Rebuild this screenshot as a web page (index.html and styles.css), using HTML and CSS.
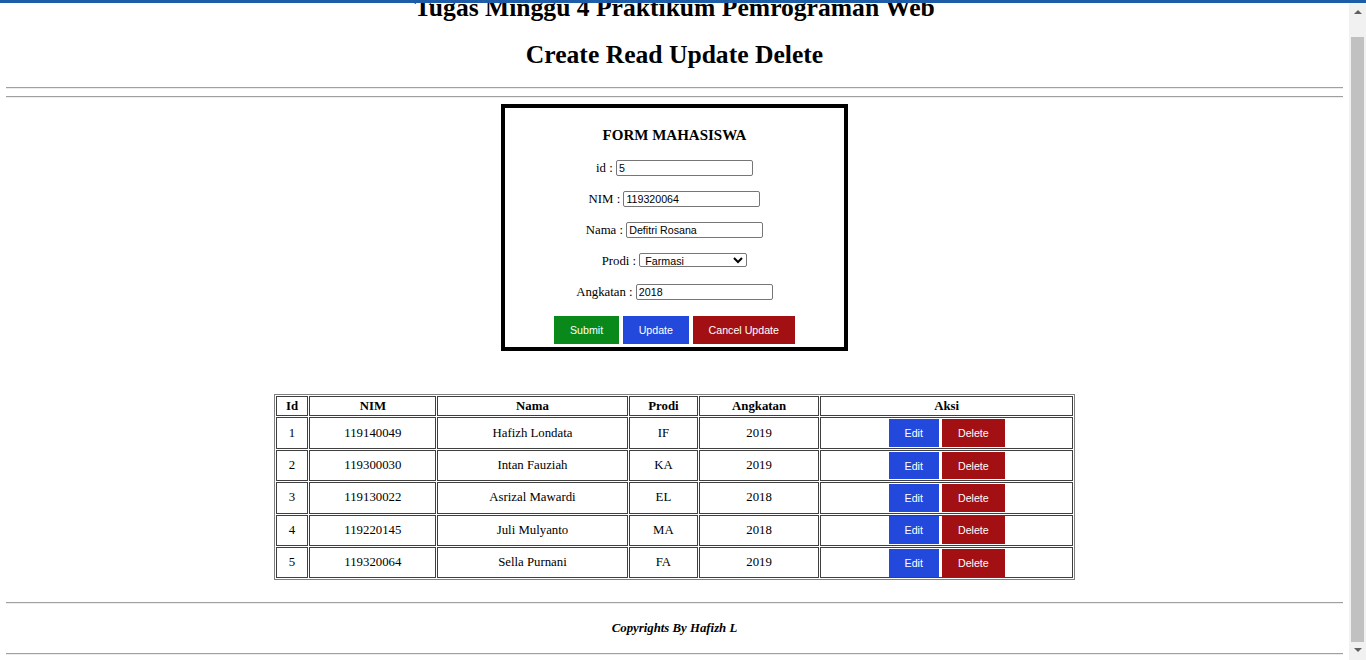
FILE: index.html
```html
<!DOCTYPE html>
<html lang="id">
<head>
<meta charset="utf-8">
<title>Tugas Minggu 4 Praktikum Pemrograman Web</title>
<link rel="stylesheet" href="styles.css">
</head>
<body>
<div class="topbar"></div>
<div class="scrollbar">
  <span class="arrow arrow-up"></span>
  <span class="thumb"></span>
  <span class="arrow arrow-down"></span>
</div>

<header class="header">
  <h1 class="title first">Tugas Minggu 4 Praktikum Pemrograman Web</h1>
  <h1 class="title">Create Read Update Delete</h1>
</header>
<hr>
<hr>

<form class="form-box">
  <h3 class="form-title">FORM MAHASISWA</h3>
  <p class="field">id : <input class="text-input" type="text" value="5"></p>
  <p class="field">NIM : <input class="text-input" type="text" value="119320064"></p>
  <p class="field">Nama : <input class="text-input" type="text" value="Defitri Rosana"></p>
  <p class="field">Prodi : <select class="select-input"><option>Farmasi</option></select></p>
  <p class="field">Angkatan : <input class="text-input" type="text" value="2018"></p>
  <div class="actions">
    <button type="button" class="btn btn-green">Submit</button>
    <button type="button" class="btn btn-blue">Update</button>
    <button type="button" class="btn btn-red">Cancel Update</button>
  </div>
</form>

<table class="data-table">
  <colgroup>
    <col class="c-id"><col class="c-nim"><col class="c-nama"><col class="c-prodi"><col class="c-angkatan"><col class="c-aksi">
  </colgroup>
  <thead>
    <tr><th>Id</th><th>NIM</th><th>Nama</th><th>Prodi</th><th>Angkatan</th><th>Aksi</th></tr>
  </thead>
  <tbody>
    <tr><td>1</td><td>119140049</td><td>Hafizh Londata</td><td>IF</td><td>2019</td>
      <td><div class="row-actions"><button type="button" class="btn btn-blue btn-sm">Edit</button><button type="button" class="btn btn-red btn-sm">Delete</button></div></td></tr>
    <tr><td>2</td><td>119300030</td><td>Intan Fauziah</td><td>KA</td><td>2019</td>
      <td><div class="row-actions"><button type="button" class="btn btn-blue btn-sm">Edit</button><button type="button" class="btn btn-red btn-sm">Delete</button></div></td></tr>
    <tr><td>3</td><td>119130022</td><td>Asrizal Mawardi</td><td>EL</td><td>2018</td>
      <td><div class="row-actions"><button type="button" class="btn btn-blue btn-sm">Edit</button><button type="button" class="btn btn-red btn-sm">Delete</button></div></td></tr>
    <tr><td>4</td><td>119220145</td><td>Juli Mulyanto</td><td>MA</td><td>2018</td>
      <td><div class="row-actions"><button type="button" class="btn btn-blue btn-sm">Edit</button><button type="button" class="btn btn-red btn-sm">Delete</button></div></td></tr>
    <tr><td>5</td><td>119320064</td><td>Sella Purnani</td><td>FA</td><td>2019</td>
      <td><div class="row-actions"><button type="button" class="btn btn-blue btn-sm">Edit</button><button type="button" class="btn btn-red btn-sm">Delete</button></div></td></tr>
  </tbody>
</table>

<hr>
<footer class="footer">
  <h4 class="copyright">Copyrights By Hafizh L</h4>
</footer>
<hr>
</body>
</html>
```

FILE: styles.css
```css
html {
  overflow: hidden;
  background: #ffffff;
}

body {
  margin: 0 17px 0 0;
  padding: 0 6.4px;
  font-family: "Liberation Serif", "Times New Roman", serif;
  font-size: 12.8px;
  color: #000000;
  background: #ffffff;
}

.topbar {
  position: fixed;
  top: 0;
  left: 0;
  right: 0;
  height: 3px;
  background: #1f5ca8;
  z-index: 10;
}

.scrollbar {
  position: fixed;
  top: 0;
  right: 0;
  bottom: 0;
  width: 17px;
  background: #f1f1f1;
  display: flex;
  flex-direction: column;
  align-items: center;
  z-index: 5;
}

.arrow {
  width: 0;
  height: 0;
  border-left: 4px solid transparent;
  border-right: 4px solid transparent;
}

.arrow-up {
  margin-top: 10px;
  border-bottom: 4px solid #606060;
}

.arrow-down {
  margin-bottom: 8px;
  border-top: 4px solid #606060;
}

.thumb {
  display: block;
  width: 13px;
  flex: 1;
  margin: 23px 0 6px;
  background: #c1c1c1;
}

.header {
  text-align: center;
}

.title {
  font-size: 25.6px;
  font-weight: bold;
  margin: 17.15px 0;
}

.title.first {
  margin-top: -6.9px;
}

hr {
  margin: 6.4px 0;
  border: none;
  border-top: 1px solid #a0a0a0;
  border-bottom: 1px solid #ededed;
  height: 0;
}

.form-box {
  width: 339px;
  margin: 6.4px auto 0;
  border: 4px solid #000000;
  padding: 4px 0 3.4px;
  text-align: center;
}

.form-title {
  font-size: 15px;
  font-weight: bold;
  line-height: 17.2px;
  margin: 14.6px 0;
}

.field {
  margin: 13.2px 0;
  line-height: 18px;
  height: 18px;
}

.text-input {
  box-sizing: border-box;
  width: 137px;
  height: 16px;
  padding: 0 2px;
  border: 1px solid #767676;
  border-radius: 2px;
  font-family: "Liberation Sans", Arial, sans-serif;
  font-size: 10.67px;
  color: #000000;
  vertical-align: baseline;
}

.select-input {
  box-sizing: border-box;
  width: 108px;
  height: 14px;
  padding: 0 1px;
  border: 1px solid #767676;
  border-radius: 2px;
  font-family: "Liberation Sans", Arial, sans-serif;
  font-size: 10.67px;
  color: #000000;
  background: #ffffff;
}

.actions {
  display: flex;
  justify-content: center;
  gap: 3.5px;
  margin-top: 14.6px;
}

.btn {
  box-sizing: border-box;
  height: 28px;
  padding: 0 16px;
  border: none;
  font-family: "Liberation Sans", Arial, sans-serif;
  font-size: 10.67px;
  color: #ffffff;
  cursor: pointer;
}

.btn-green { background: #08891a; }
.btn-blue { background: #2349dc; }
.btn-red { background: #a31013; }

.btn-sm {
  height: 27.8px;
}

.data-table {
  width: 60%;
  margin: 42.6px auto 22px;
  border: 1px solid #808080;
  border-spacing: 1.6px;
  table-layout: fixed;
  text-align: center;
}

.c-id { width: 32.5px; }
.c-nim { width: 126px; }
.c-nama { width: 189px; }
.c-prodi { width: 69px; }
.c-angkatan { width: 119px; }
.c-aksi { width: 251.5px; }

.data-table th,
.data-table td {
  border: 1px solid #3f3f3f;
  padding: 0.8px;
  vertical-align: middle;
}

.data-table th {
  font-weight: bold;
  line-height: 17px;
}

.row-actions {
  display: flex;
  justify-content: center;
  gap: 3px;
}

.footer {
  text-align: center;
}

.copyright {
  font-size: 12.8px;
  font-style: italic;
  font-weight: bold;
  margin: 16.8px 0;
}
```
